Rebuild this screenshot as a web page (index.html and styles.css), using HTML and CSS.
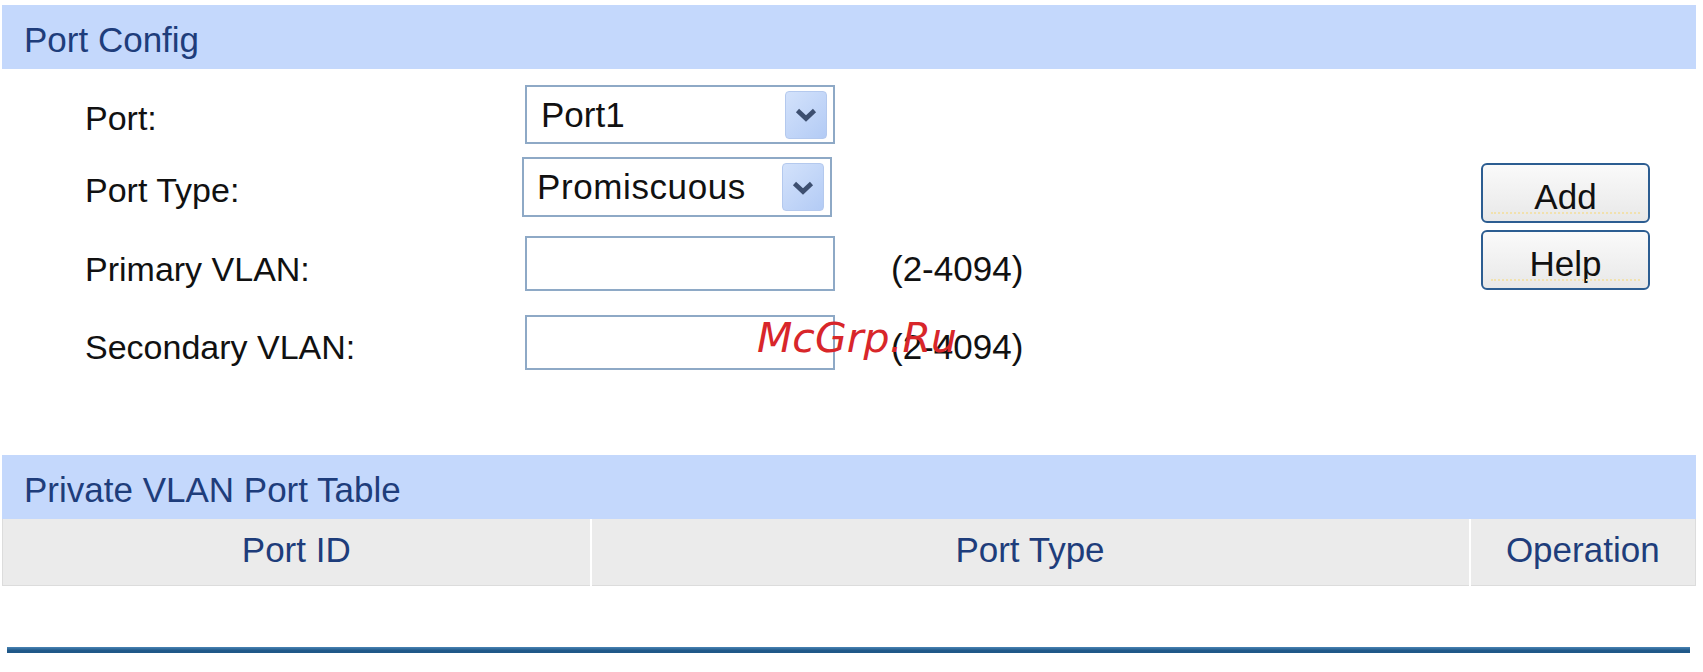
FILE: index.html
```html
<!DOCTYPE html>
<html lang="en">
<head>
  <meta charset="UTF-8">
  <meta name="viewport" content="width=device-width, initial-scale=1.0">
  <title>Private VLAN Port Config</title>
  <link rel="stylesheet" href="styles.css">
</head>
<body>
  <!-- Port Config Section -->
  <div class="panel-title">Port Config</div>
  <div class="config">
    <div class="fields">
      <label class="lbl">Port:</label>
      <div class="select">
        <span class="select-value">Port1</span>
        <span class="drop">
          <svg width="24" height="15" viewBox="0 0 24 15"><polyline points="3.5,3.5 12,11.5 20.5,3.5" fill="none" stroke="#3d4f70" stroke-width="4.6"/></svg>
        </span>
      </div>
      <span></span>

      <label class="lbl">Port Type:</label>
      <div class="select select-wide">
        <span class="select-value">Promiscuous</span>
        <span class="drop">
          <svg width="24" height="15" viewBox="0 0 24 15"><polyline points="3.5,3.5 12,11.5 20.5,3.5" fill="none" stroke="#3d4f70" stroke-width="4.6"/></svg>
        </span>
      </div>
      <span></span>

      <label class="lbl lbl-low" for="primary">Primary VLAN:</label>
      <input type="text" id="primary" class="text-box">
      <span class="range">(2-4094)</span>

      <label class="lbl lbl-low" for="secondary">Secondary VLAN:</label>
      <input type="text" id="secondary" class="text-box">
      <span class="range">(2-4094)</span>
    </div>

    <!-- Buttons -->
    <div class="actions">
      <button class="btn">Add</button>
      <button class="btn">Help</button>
    </div>
  </div>

  <!-- Port Table Section -->
  <div class="panel-title">Private VLAN Port Table</div>
  <table class="port-table">
    <thead>
      <tr>
        <th class="col-id">Port ID</th>
        <th class="col-type">Port Type</th>
        <th class="col-op">Operation</th>
      </tr>
    </thead>
  </table>

  <div class="footer-rule"></div>

  <div class="watermark">McGrp.Ru</div>
</body>
</html>
```

FILE: styles.css
```css
body {
  margin: 0;
  font-family: "Liberation Sans", Arial, sans-serif;
  background-color: #fff;
  color: #111;
}
.panel-title {
  margin: 5px 7px 0 2px;
  height: 64px;
  box-sizing: border-box;
  padding: 6px 0 0 22px;
  line-height: 58px;
  font-size: 35px;
  color: #1e3d7b;
  background-color: #c4d8fc;
}
.config {
  display: flex;
  justify-content: space-between;
  padding-top: 9px;
  margin-bottom: 75px;
}
.fields {
  display: grid;
  grid-template-columns: 440px 310px auto;
  grid-template-rows: 73px 72px 81px 76px;
  align-items: center;
  padding-left: 85px;
}
.lbl {
  margin-top: 6px;
  font-size: 34px;
  line-height: 40px;
  color: #111;
}
.lbl-low {
  margin-top: 10px;
}
.select {
  display: flex;
  align-items: center;
  justify-content: space-between;
  height: 59px;
  box-sizing: border-box;
  border: 2px solid #8ea9c6;
  padding: 0 6px 0 14px;
  background-color: #fff;
}
.select-wide {
  width: 310px;
  height: 60px;
  margin-left: -3px;
  padding-left: 13px;
}
.select-value {
  font-size: 35px;
  color: #111;
}
.select-wide .select-value {
  letter-spacing: 0.6px;
}
.drop {
  display: flex;
  align-items: center;
  justify-content: center;
  width: 42px;
  height: 48px;
  box-sizing: border-box;
  border: 1px solid #b4c9ee;
  border-radius: 4px;
  background: linear-gradient(135deg, #d3e2fb, #b3cbf5);
}
.text-box {
  margin: 0;
  height: 55px;
  box-sizing: border-box;
  border: 2px solid #8ea9c6;
  background-color: #fff;
  font-size: 35px;
  font-family: inherit;
}
.range {
  margin: 10px 0 0 56px;
  font-size: 35px;
  color: #111;
}
.actions {
  display: flex;
  flex-direction: column;
  gap: 7px;
  margin: 85px 53px 0 0;
}
.btn {
  position: relative;
  width: 169px;
  height: 60px;
  border: 2px solid #2c5d91;
  border-radius: 6px;
  background: linear-gradient(#fafafa, #e8e8e8);
  font-family: inherit;
  font-size: 35px;
  color: #111;
  padding: 7px 0 0;
  cursor: pointer;
}
.btn::after {
  content: "";
  position: absolute;
  left: 8px;
  right: 8px;
  bottom: 7px;
  border-bottom: 2px dotted #f1e1ad;
}
.port-table {
  margin: 0 7px 0 2px;
  width: 1694px;
  border-collapse: collapse;
  border: 1px solid #dcdcdc;
  border-top: none;
}
.port-table th {
  height: 66px;
  padding: 0 0 4px;
  box-sizing: border-box;
  vertical-align: top;
  line-height: 62px;
  font-size: 35px;
  font-weight: normal;
  color: #1e3d7b;
  background-color: #ebebeb;
}
.port-table th + th {
  border-left: 2px solid #fff;
}
.col-id {
  width: 588px;
}
.col-type {
  width: 879px;
}
.footer-rule {
  margin: 61px 13px 0 7px;
  height: 6px;
  background: linear-gradient(#4a84b4, #1f5888 60%);
}
.watermark {
  position: absolute;
  left: 757px;
  top: 318px;
  font-family: "DejaVu Sans", sans-serif;
  font-style: italic;
  font-size: 41px;
  line-height: 41px;
  color: #d8262a;
}
```
